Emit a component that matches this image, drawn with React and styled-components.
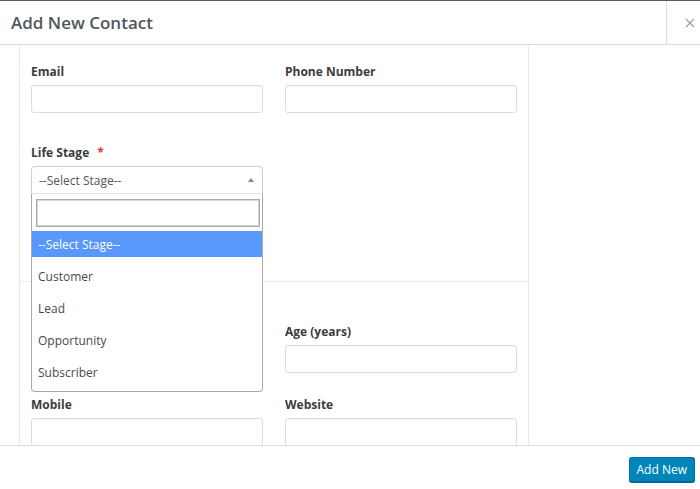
import React from 'react';
import styled, { createGlobalStyle } from 'styled-components';

const GlobalStyle = createGlobalStyle`
  html, body {
    margin: 0;
    padding: 0;
    background: #fff;
    font-family: "Open Sans", "Liberation Sans", sans-serif;
  }
  * { box-sizing: border-box; }
`;

const StyledModal = styled.div`
  width: 700px;
  height: 489px;
  display: flex;
  flex-direction: column;
  border-top: 1px solid #5a5a5a;
  background: #fff;
  overflow: hidden;
`;

const StyledHeader = styled.div`
  display: flex;
  align-items: stretch;
  height: 44px;
  flex-shrink: 0;
  border-bottom: 1px solid #dddddd;
`;

const StyledTitle = styled.h1`
  flex: 1;
  margin: 0;
  padding-left: 11px;
  display: flex;
  align-items: center;
  font-size: 17px;
  font-weight: 600;
  color: #50575e;
`;

const StyledClose = styled.div`
  width: 34px;
  border-left: 1px solid #dddddd;
  display: flex;
  align-items: center;
  justify-content: flex-end;
  padding-right: 5px;
  color: #9a9a9a;
`;

const StyledBody = styled.div`
  flex: 1;
  overflow: hidden;
  padding-left: 19px;
`;

const StyledCard = styled.div`
  width: 510px;
  height: 100%;
  border-left: 1px solid #e8e8e8;
  border-right: 1px solid #e8e8e8;
`;

const StyledSection = styled.div`
  padding: ${({ top }) => top}px 11px ${({ bottom }) => bottom}px 11px;
  border-bottom: ${({ divided }) => (divided ? '1px solid #ececec' : 'none')};
`;

const StyledRow = styled.div`
  display: grid;
  grid-template-columns: 232px 232px;
  column-gap: 22px;
  margin-bottom: ${({ gap }) => gap}px;
`;

const StyledField = styled.div`
  display: flex;
  flex-direction: column;
  position: relative;
`;

const StyledLabel = styled.label`
  height: 14px;
  font-size: 12px;
  line-height: 14px;
  font-weight: 700;
  color: #3c3c3c;
  margin-bottom: 6px;
`;

const StyledRequired = styled.span`
  color: #d63638;
  margin-left: 8px;
`;

const StyledInput = styled.div`
  height: 28px;
  border: 1px solid #dcdcdc;
  border-radius: 3px;
  background: #fff;
  box-shadow: inset 0 1px 1px rgba(0, 0, 0, 0.03);
`;

const StyledSelect = styled.div`
  height: 28px;
  border: 1px solid #cfcfcf;
  border-radius: 4px 4px 0 0;
  border-bottom-color: #e2e2e2;
  display: flex;
  align-items: center;
  justify-content: space-between;
  padding: 0 8px 0 7px;
  font-size: 12px;
  color: #555;
`;

const StyledArrow = styled.span`
  width: 0;
  height: 0;
  border-left: 3px solid transparent;
  border-right: 3px solid transparent;
  border-bottom: 4px solid #888;
`;

const StyledDropdown = styled.div`
  position: absolute;
  top: 100%;
  left: 0;
  width: 232px;
  background: #fff;
  border: 1px solid #aaaaaa;
  border-top: none;
  border-radius: 0 0 4px 4px;
  z-index: 10;
`;

const StyledSearchWrap = styled.div`
  padding: 5px 2px 4px 4px;
`;

const StyledSearch = styled.div`
  height: 28px;
  border: 1px solid #aaaaaa;
  box-shadow: inset 0 0 0 1px #cfd8e0;
`;

const StyledOptions = styled.div`
  padding-bottom: 3px;
`;

const StyledOption = styled.div`
  height: ${({ active }) => (active ? 26 : 32)}px;
  margin-bottom: ${({ active }) => (active ? 3 : 0)}px;
  display: flex;
  align-items: center;
  padding-left: 6px;
  font-size: 12px;
  color: ${({ active }) => (active ? '#fff' : '#4a4a4a')};
  background: ${({ active }) => (active ? '#5897fb' : '#fff')};
`;

const StyledFooter = styled.div`
  height: 44px;
  flex-shrink: 0;
  border-top: 1px solid #dddddd;
  display: flex;
  align-items: center;
  justify-content: flex-end;
  padding-right: 5px;
`;

const StyledButton = styled.button`
  height: 25px;
  padding: 0 7px;
  font-family: inherit;
  font-size: 12px;
  color: #fff;
  background: #0085ba;
  border: 1px solid #0073aa;
  border-bottom-color: #006799;
  border-radius: 3px;
  box-shadow: 0 1px 0 #006799;
  margin-top: 3px;
`;

const stages = ['--Select Stage--', 'Customer', 'Lead', 'Opportunity', 'Subscriber'];

const Field = ({ label, required, children }) => (
  <StyledField>
    <StyledLabel>
      {label}
      {required && <StyledRequired>*</StyledRequired>}
    </StyledLabel>
    {children || <StyledInput />}
  </StyledField>
);

const App = () => (
  <>
    <GlobalStyle />
    <StyledModal>
      <StyledHeader>
        <StyledTitle>Add New Contact</StyledTitle>
        <StyledClose>
          <svg width="10" height="10" viewBox="0 0 10 10">
            <path d="M1 1L9 9M9 1L1 9" stroke="#9a9a9a" strokeWidth="1.1" />
          </svg>
        </StyledClose>
      </StyledHeader>
      <StyledBody>
        <StyledCard>
          <StyledSection top={20} bottom={87} divided>
            <StyledRow gap={33}>
              <Field label="Email" />
              <Field label="Phone Number" />
            </StyledRow>
            <StyledRow gap={0}>
              <Field label="Life Stage" required>
                <StyledSelect>
                  --Select Stage--
                  <StyledArrow />
                </StyledSelect>
                <StyledDropdown>
                  <StyledSearchWrap>
                    <StyledSearch />
                  </StyledSearchWrap>
                  <StyledOptions>
                    {stages.map((stage, i) => (
                      <StyledOption key={stage} active={i === 0}>
                        {stage}
                      </StyledOption>
                    ))}
                  </StyledOptions>
                </StyledDropdown>
              </Field>
            </StyledRow>
          </StyledSection>
          <StyledSection top={43} bottom={0}>
            <StyledRow gap={25}>
              <Field />
              <Field label="Age (years)" />
            </StyledRow>
            <StyledRow gap={0}>
              <Field label="Mobile" />
              <Field label="Website" />
            </StyledRow>
          </StyledSection>
        </StyledCard>
      </StyledBody>
      <StyledFooter>
        <StyledButton>Add New</StyledButton>
      </StyledFooter>
    </StyledModal>
  </>
);

export default App;
